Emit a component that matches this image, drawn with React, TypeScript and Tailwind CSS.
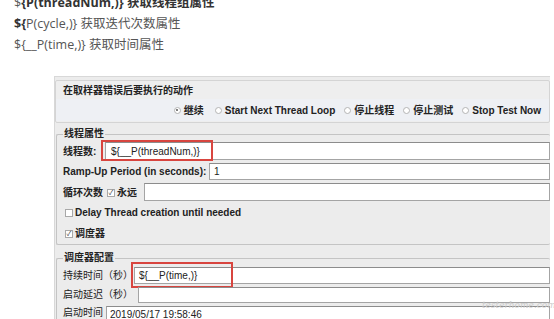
import React from 'react'

const ui = { fontFamily: '"Liberation Sans", "Noto Sans CJK SC", sans-serif' }
const doc = { fontFamily: '"Open Sans", "Noto Sans CJK SC", sans-serif' }

function Radio({ checked = false }: { checked?: boolean }) {
	return (
		<span className="relative inline-block h-[7px] w-[7px] rounded-full border border-[#b4b4b4] bg-white">
			{checked && (
				<span className="absolute left-[1.5px] top-[1.5px] h-[2px] w-[2px] rounded-full bg-[#555]" />
			)}
		</span>
	)
}

function Check({ checked = false }: { checked?: boolean }) {
	return (
		<span className="inline-flex h-[8px] w-[8px] items-center justify-center border border-[#a8a8a8] bg-white text-[7px] leading-none font-normal text-[#444]">
			{checked ? '✓' : ''}
		</span>
	)
}

function Field({
	value = '',
	h,
	pad = 'pl-[4px]',
	mark,
}: {
	value?: string
	h: string
	pad?: string
	mark?: string
}) {
	return (
		<div className={`relative flex-1 ${h}`}>
			<div
				className={`flex h-full items-center border border-[#a4a4a4] border-t-[#8c8c8c] bg-white ${pad} text-[10px] font-normal text-[#222]`}
			>
				{value}
			</div>
			{mark && <div className={`absolute border-2 border-[#d8453f] ${mark}`} />}
		</div>
	)
}

export default function App() {
	return (
		<div className="relative h-[319px] w-[554px] overflow-hidden bg-white">
			<div
				className="-mt-[8px] pl-[14px] text-[12.5px] leading-[21px] text-[#555]"
				style={doc}
			>
				<div>
					<span>$</span>
					<span className="font-bold text-[#333]">{'{P(threadNum,)} 获取线程组属性'}</span>
				</div>
				<div>
					<span className="font-bold text-[#333]">{'${'}</span>
					{'P(cycle,)} 获取迭代次数属性'}
				</div>
				<div>{'${__P(time,)} 获取时间属性'}</div>
			</div>

			<div
				className="ml-[54px] mt-[21px] h-[260px] w-[496px] overflow-hidden border-l border-t border-[#d8d8d8] bg-[#ececec] pt-[3px] text-[10px] font-bold text-[#222]"
				style={ui}
			>
				<div className="h-[43px] rounded-[2px] border border-[#d4d4d4] bg-[#eeeeee]">
					<div className="flex h-[18px] items-center pl-[7px]">在取样器错误后要执行的动作</div>
					<div className="flex h-[22px] items-center justify-end gap-[3px] bg-[#eef0f4] pr-[8px]">
						<Radio checked />
						<span className="mr-[8px]">继续</span>
						<Radio />
						<span className="mr-[6px]">Start Next Thread Loop</span>
						<Radio />
						<span className="mr-[6px]">停止线程</span>
						<Radio />
						<span className="mr-[6px]">停止测试</span>
						<Radio />
						<span>Stop Test Now</span>
					</div>
				</div>

				<fieldset className="mt-[4px] ml-[1px] rounded-[2px] border border-r-0 border-[#c4c4c4] pl-[6px]">
					<legend className="px-[1px] leading-[14px]">线程属性</legend>
					<div className="flex h-[20px] items-start pt-[1px]">
						<span className="w-[42px] pt-[2px]">线程数:</span>
						<Field
							h="h-[18px]"
							pad="pl-[5px]"
							value="${__P(threadNum,)}"
							mark="-left-[4px] -top-[2px] h-[21px] w-[112px]"
						/>
					</div>
					<div className="flex h-[20px] items-start pt-[2px]">
						<span className="w-[146px] pt-[1px]">Ramp-Up Period (in seconds):</span>
						<Field h="h-[17px]" value="1" />
					</div>
					<div className="flex h-[21px] items-start pt-[2px]">
						<span className="flex w-[81px] items-center gap-[4px] pt-[2px]">
							循环次数
							<span className="flex items-center gap-[2px]">
								<Check checked />
								永远
							</span>
						</span>
						<Field h="h-[18px]" />
					</div>
					<div className="flex h-[21px] items-center gap-[2px] pl-[2px]">
						<Check />
						<span>Delay Thread creation until needed</span>
					</div>
					<div className="flex h-[21px] items-center gap-[2px] pl-[2px]">
						<Check checked />
						<span>调度器</span>
					</div>
				</fieldset>

				<fieldset className="mt-[6px] ml-[1px] rounded-[2px] border border-r-0 border-[#c4c4c4] pl-[6px]">
					<legend className="px-[1px] leading-[14px]">调度器配置</legend>
					<div className="flex h-[20px] items-center">
						<span className="w-[71px] font-normal">持续时间（秒）</span>
						<Field
							h="h-[17px]"
							value="${__P(time,)}"
							mark="-left-[3px] -top-[5px] h-[26px] w-[102px]"
						/>
					</div>
					<div className="flex h-[19px] items-center">
						<span className="w-[75px] font-normal">启动延迟（秒）</span>
						<Field h="h-[16px]" />
					</div>
					<div className="flex h-[18px] items-end">
						<span className="w-[43px] pb-[2px] font-normal">启动时间</span>
						<Field h="h-[16px]" pad="pl-[3px]" value="2019/05/17 19:58:46" />
					</div>
				</fieldset>
			</div>

			<div
				className="absolute left-[482px] top-[299px] pr-[2px] text-[9px] leading-[12px] italic text-[#cdcdcd]"
				style={{ fontFamily: '"DejaVu Serif", serif' }}
			>
				testerhome.com
			</div>
		</div>
	)
}
